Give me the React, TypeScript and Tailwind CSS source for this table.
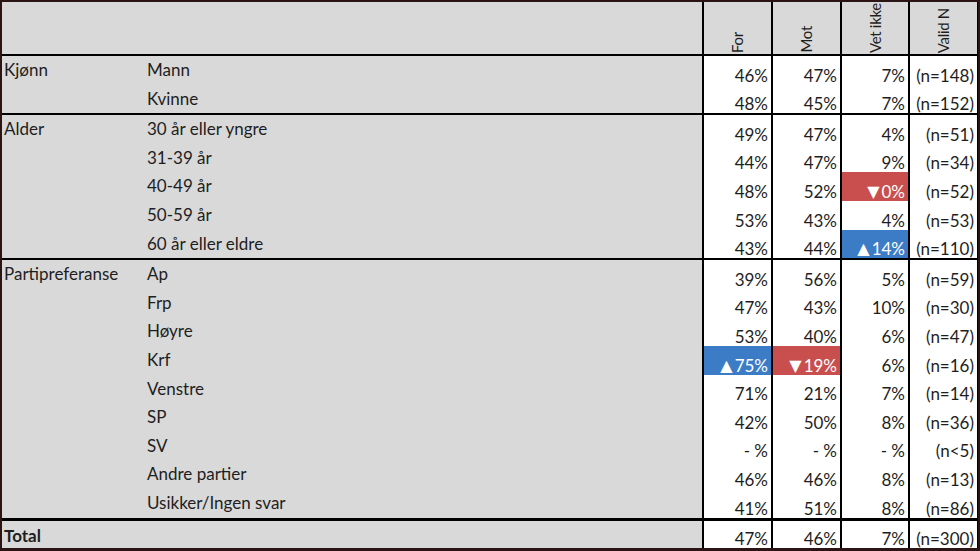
import React from 'react';

type Cell = string | { v: string; tone: 'up' | 'down' };

type Row = { label: string; cells: Cell[] };

type Group = { name: string; rows: Row[] };

const groups: Group[] = [
  {
    name: 'Kjønn',
    rows: [
      { label: 'Mann', cells: ['46%', '47%', '7%', '(n=148)'] },
      { label: 'Kvinne', cells: ['48%', '45%', '7%', '(n=152)'] },
    ],
  },
  {
    name: 'Alder',
    rows: [
      { label: '30 år eller yngre', cells: ['49%', '47%', '4%', '(n=51)'] },
      { label: '31-39 år', cells: ['44%', '47%', '9%', '(n=34)'] },
      { label: '40-49 år', cells: ['48%', '52%', { v: '0%', tone: 'down' }, '(n=52)'] },
      { label: '50-59 år', cells: ['53%', '43%', '4%', '(n=53)'] },
      { label: '60 år eller eldre', cells: ['43%', '44%', { v: '14%', tone: 'up' }, '(n=110)'] },
    ],
  },
  {
    name: 'Partipreferanse',
    rows: [
      { label: 'Ap', cells: ['39%', '56%', '5%', '(n=59)'] },
      { label: 'Frp', cells: ['47%', '43%', '10%', '(n=30)'] },
      { label: 'Høyre', cells: ['53%', '40%', '6%', '(n=47)'] },
      { label: 'Krf', cells: [{ v: '75%', tone: 'up' }, { v: '19%', tone: 'down' }, '6%', '(n=16)'] },
      { label: 'Venstre', cells: ['71%', '21%', '7%', '(n=14)'] },
      { label: 'SP', cells: ['42%', '50%', '8%', '(n=36)'] },
      { label: 'SV', cells: ['- %', '- %', '- %', '(n<5)'] },
      { label: 'Andre partier', cells: ['46%', '46%', '8%', '(n=13)'] },
      { label: 'Usikker/Ingen svar', cells: ['41%', '51%', '8%', '(n=86)'] },
    ],
  },
];

// widths include the 2px left rule
const widths = ['w-[69px]', 'w-[69px]', 'w-[68px]', 'w-[69px]'];
const heads = ['For', 'Mot', 'Vet ikke', 'Valid N'];

function DataCell({ cell, i }: { cell: Cell; i: number }) {
  if (typeof cell === 'string') {
    return (
      <div className={`${widths[i]} shrink-0 border-l-2 border-black bg-white flex items-end justify-end pr-[3px] pb-[1px] leading-[16px] whitespace-nowrap`}>
        {cell}
      </div>
    );
  }
  const up = cell.tone === 'up';
  return (
    <div
      className={`${widths[i]} shrink-0 border-l-2 border-black flex items-end justify-end pr-[3px] pb-[1px] leading-[16px] text-white whitespace-nowrap ${
        up ? 'bg-[#3c7cc6]' : 'bg-[#c84f4e]'
      }`}
    >
      <span className="font-['DejaVu_Sans'] text-[16px] leading-[16px] mr-[2px]">{up ? '▲' : '▼'}</span>
      {cell.v}
    </div>
  );
}

function App() {
  return (
    <div
      className="w-[980px] h-[551px] bg-[#2b1414] pt-[2px] pl-[2px] pr-[2px] pb-[3px] text-[17px] leading-[20px] text-[#1e1e1e]"
      style={{ fontFamily: 'Lato, "Open Sans", sans-serif' }}
    >
      <div className="h-full flex flex-col border-r border-black">
        <div className="h-[54px] flex border-b-2 border-black shrink-0">
          <div className="flex-1 bg-[#d9d9d9]" />
          {heads.map((h, i) => (
            <div key={h} className={`${widths[i]} shrink-0 border-l-2 border-black bg-[#d9d9d9] flex items-end justify-center pb-[1px] overflow-hidden`}>
              <span className="[writing-mode:vertical-rl] rotate-180 whitespace-nowrap text-[15px] leading-[17px] tracking-[-0.3px]">{h}</span>
            </div>
          ))}
        </div>

        {groups.map((g, gi) => (
          <div key={g.name} className={`flex flex-col shrink-0 ${gi < groups.length - 1 ? 'border-b-2' : 'border-b-[3px]'} border-black`}>
            {g.rows.map((r, ri) => (
              <div key={r.label} className="h-[28.6px] flex">
                <div className="flex-1 bg-[#d9d9d9] flex items-start pt-[4px]">
                  <div className="w-[145px] pl-[2px]">{ri === 0 ? g.name : ''}</div>
                  <div>{r.label}</div>
                </div>
                {r.cells.map((c, i) => (
                  <DataCell key={i} cell={c} i={i} />
                ))}
              </div>
            ))}
          </div>
        ))}

        <div className="flex-1 flex">
          <div className="flex-1 bg-[#d9d9d9] flex items-end pb-[2px] pl-[2px] font-bold">Total</div>
          {['47%', '46%', '7%', '(n=300)'].map((c, i) => (
            <DataCell key={i} cell={c} i={i} />
          ))}
        </div>
      </div>
    </div>
  );
}

export default App;
